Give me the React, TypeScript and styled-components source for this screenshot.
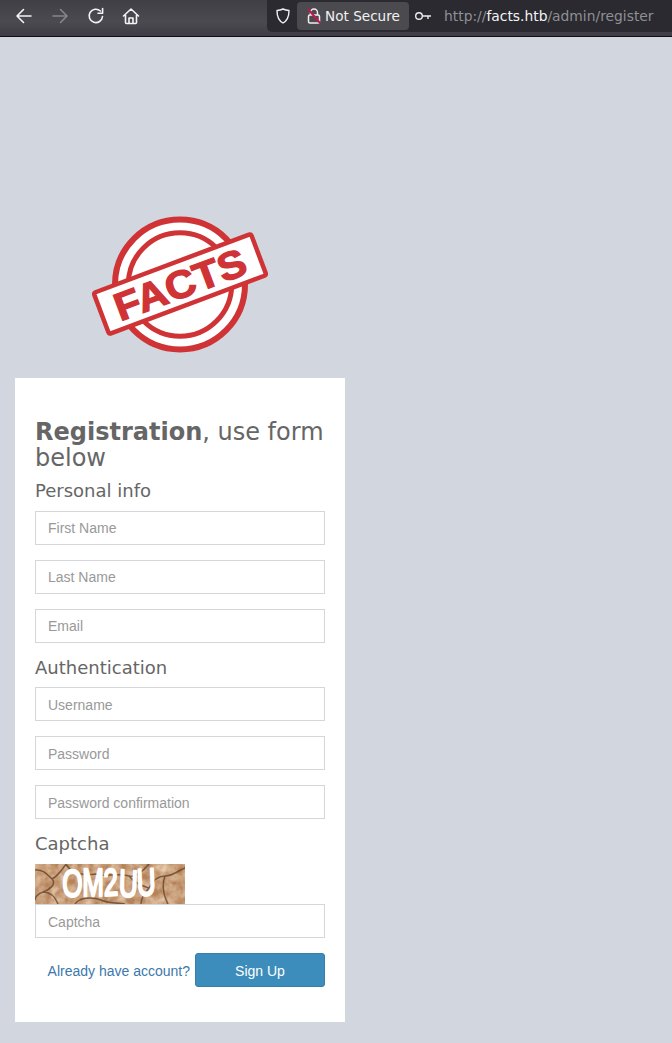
import React from "react";
import styled, { createGlobalStyle } from "styled-components";

const Global = createGlobalStyle`
  html, body { margin: 0; padding: 0; background: #d2d6de; }
  body { font-family: "Liberation Sans", Arial, sans-serif; }
  * { box-sizing: border-box; }
`;

const Page = styled.div`
  width: 672px;
  height: 1043px;
  overflow: hidden;
  background: #d2d6de;
`;

const Toolbar = styled.header`
  height: 37px;
  display: flex;
  align-items: flex-start;
  background: linear-gradient(#3f3f45, #4a4a50 60%, #3d3d43);
  border-bottom: 1px solid #0e0e11;
`;

const NavButtons = styled.div`
  width: 267px;
  height: 36px;
  flex: none;
  display: flex;
  align-items: center;
  padding-left: 14px;
  gap: 16px;
`;

const NavIcon = styled.svg<{ $dim?: boolean }>`
  width: 20px;
  height: 20px;
  margin-top: -4px;
  flex: none;
  fill: none;
  stroke: ${(p) => (p.$dim ? "#85858a" : "#f4f4f5")};
  stroke-width: 1.6;
  stroke-linecap: round;
  stroke-linejoin: round;
  &:last-child { margin-left: -1px; }
`;

const UrlBar = styled.div`
  flex: 1;
  height: 32px;
  background: #2b2a30;
  border-radius: 0 0 0 5px;
  display: flex;
  align-items: center;
  padding-left: 7px;
  color: #f2f2f3;
`;

const ShieldIcon = styled.svg`
  width: 18px;
  height: 18px;
  flex: none;
  fill: none;
  stroke: #f0f0f2;
  stroke-width: 1.4;
  stroke-linejoin: round;
`;

const SecureChip = styled.div`
  margin-left: 5px;
  height: 28px;
  width: 112px;
  flex: none;
  padding-left: 9px;
  background: #4a4a4f;
  border-radius: 4px;
  display: flex;
  align-items: center;
  gap: 3px;
  white-space: nowrap;
  font-family: "DejaVu Sans", sans-serif;
  font-size: 13.6px;
`;

const LockIcon = styled.svg`
  width: 16px;
  height: 18px;
  flex: none;
`;

const KeyIcon = styled.svg`
  width: 18px;
  height: 12px;
  margin-left: 5px;
  flex: none;
  fill: none;
  stroke: #eeeeef;
  stroke-width: 1.4;
`;

const Url = styled.div`
  margin-left: 12px;
  color: #8f8f94;
  white-space: nowrap;
  font-family: "DejaVu Sans", sans-serif;
  font-size: 13.85px;
  b { color: #f5f5f6; font-weight: 400; }
`;

const Main = styled.main`
  width: 360px;
  padding: 179px 15px 0;
`;

const LogoWrap = styled.div`
  height: 162px;
  display: flex;
  justify-content: center;
`;

const Logo = styled.svg`
  width: 180px;
  height: 140px;
  flex: none;
`;

const Card = styled.section`
  width: 330px;
  height: 644px;
  background: #fff;
  padding: 41px 20px 0;
  color: #666;
  font-family: "DejaVu Sans", sans-serif;
`;

const Title = styled.h1`
  margin: 0;
  font-size: 24px;
  line-height: 26px;
  font-weight: 400;
  strong { font-weight: 700; }
`;

const Section = styled.h2<{ $top: number; $bottom: number }>`
  margin: ${(p) => p.$top}px 0 ${(p) => p.$bottom}px;
  font-size: 18px;
  line-height: 20px;
  font-weight: 400;
`;

const Input = styled.input<{ $low?: boolean }>`
  display: block;
  width: 290px;
  height: 34px;
  margin-bottom: 15px;
  padding: ${(p) => (p.$low ? "2px" : "0")} 12px 0;
  border: 1px solid #d4d6d9;
  border-radius: 0;
  outline: none;
  background: #fff;
  font-family: "Liberation Sans", Arial, sans-serif;
  font-size: 14px;
  color: #555;
  &::placeholder { color: #999; opacity: 1; }
`;

const Captcha = styled.div`
  width: 150px;
  height: 40px;
  overflow: hidden;
  background: #bb8a60;
`;

const CaptchaArt = styled.svg`
  display: block;
  width: 150px;
  height: 40px;
`;

const Footer = styled.div`
  display: flex;
  justify-content: flex-end;
  align-items: center;
  gap: 5px;
`;

const LoginLink = styled.a`
  padding-top: 2px;
  color: #3c78ac;
  font-family: "Liberation Sans", Arial, sans-serif;
  font-size: 14px;
  text-decoration: none;
`;

const SignUp = styled.button`
  width: 130px;
  height: 34px;
  padding: 2px 0 0;
  border: 1px solid #367fa9;
  border-radius: 3px;
  background: #3c8dbc;
  color: #fff;
  font-family: "Liberation Sans", Arial, sans-serif;
  font-size: 14px;
`;

export default function App() {
  return (
    <Page>
      <Global />
      <Toolbar>
        <NavButtons>
          <NavIcon viewBox="0 0 20 20"><path d="M17 10H3.500M9.500 3.500 3 10l6.500 6.500" /></NavIcon>
          <NavIcon viewBox="0 0 20 20" $dim><path d="M3 10h13.500M10.500 3.500 17 10l-6.500 6.500" /></NavIcon>
          <NavIcon viewBox="0 0 20 20"><path d="M16.500 10.500A6.700 6.700 0 1 1 14.400 5M16.600 2.600v4.600H12" /></NavIcon>
          <NavIcon viewBox="0 0 20 20"><path d="M2.500 10 10 3l7.500 7M4.500 9v7.500a1 1 0 0 0 1 1h9a1 1 0 0 0 1-1V9M8 17.500V12h4v5.500" /></NavIcon>
        </NavButtons>
        <UrlBar>
          <ShieldIcon viewBox="0 0 18 18"><path d="M9 2c2 1 3.800 1.400 6 1.500 0 5.500-1.300 10-6 12.500C4.300 13.500 3 9 3 3.500 5.200 3.400 7 3 9 2Z" /></ShieldIcon>
          <SecureChip>
            <LockIcon viewBox="0 0 16 18">
              <path d="M4.500 8V5.500a3.500 3.500 0 0 1 7 0V8" fill="none" stroke="#eee" strokeWidth="1.500" />
              <rect x="2.500" y="8" width="11" height="8" rx="1.500" fill="none" stroke="#eee" strokeWidth="1.500" />
              <path d="M2 2l12 14" stroke="#c0174f" strokeWidth="2" />
            </LockIcon>
            Not Secure
          </SecureChip>
          <KeyIcon viewBox="0 0 18 12"><circle cx="5" cy="6" r="3.300" /><path d="M8.300 6H17M14 6v3" /></KeyIcon>
          <Url>http://<b>facts.htb</b>/admin/register</Url>
        </UrlBar>
      </Toolbar>
      <Main>
        <LogoWrap>
          <Logo viewBox="0 0 180 140">
            <circle cx="90" cy="68.500" r="65" fill="#fff" stroke="#cf3335" strokeWidth="6" />
            <circle cx="90" cy="68.500" r="51.700" fill="#fff" stroke="#cf3335" strokeWidth="5" />
            <g transform="rotate(-20.600 90 68)">
              <rect x="6" y="46" width="168" height="44" rx="2" fill="#fff" stroke="#cf3335" strokeWidth="4.500" />
              <text x="90" y="82" textAnchor="middle" fill="#cf3335" stroke="#cf3335" strokeWidth="1.300" fontFamily="Liberation Sans" fontWeight="700" fontSize="39" textLength="138" lengthAdjust="spacingAndGlyphs">FACTS</text>
            </g>
          </Logo>
        </LogoWrap>
        <Card>
          <Title><strong>Registration</strong>, use form below</Title>
          <Section $top={10} $bottom={10}>Personal info</Section>
          <Input placeholder="First Name" />
          <Input placeholder="Last Name" />
          <Input placeholder="Email" />
          <Section $top={0} $bottom={9}>Authentication</Section>
          <Input placeholder="Username" $low />
          <Input placeholder="Password" $low />
          <Input placeholder="Password confirmation" $low />
          <Section $top={0} $bottom={10}>Captcha</Section>
          <Captcha>
            <CaptchaArt viewBox="0 0 150 40">
              <filter id="grain" x="0" y="0" width="100%" height="100%">
                <feTurbulence type="fractalNoise" baseFrequency="0.12" numOctaves="3" seed="4" />
                <feColorMatrix values="0 0 0 0 0.87  0 0 0 0 0.68  0 0 0 0 0.5  0.9 0.9 0 0 -0.55" />
              </filter>
              <rect width="150" height="40" fill="#b5835a" />
              <rect width="150" height="40" filter="url(#grain)" />
              <g fill="none" stroke="#5f3d26" strokeWidth="1.500" opacity=".75">
                <path d="M0 6C8 5 12 10 17 15s-3 11-9 13-8 6-8 8M17 15c6-3 10-9 14-15M8 28c7 0 12 4 15 12M31 0c4 8 14 12 30 10M60 10c10 4 20-2 34 2 6 2 14-5 20-12M94 12c6 8 14 10 20 12M114 24c4-8 10-12 16-12 8 0 14-6 20-8M114 24c-5 6-8 10-8 16M130 12c-3 8-2 18 3 28M40 40c4-6 16-8 26-4 8 4 16 2 24 4" />
              </g>
              <text x="27" y="32" fill="#fff" stroke="#fff" strokeWidth="2.400" strokeLinejoin="round" fontFamily="Liberation Sans" fontSize="38" rotate="2 0 -3 3 -3" textLength="94" lengthAdjust="spacingAndGlyphs">OM2UU</text>
            </CaptchaArt>
          </Captcha>
          <Input placeholder="Captcha" $low />
          <Footer>
            <LoginLink href="#">Already have account?</LoginLink>
            <SignUp>Sign Up</SignUp>
          </Footer>
        </Card>
      </Main>
    </Page>
  );
}
